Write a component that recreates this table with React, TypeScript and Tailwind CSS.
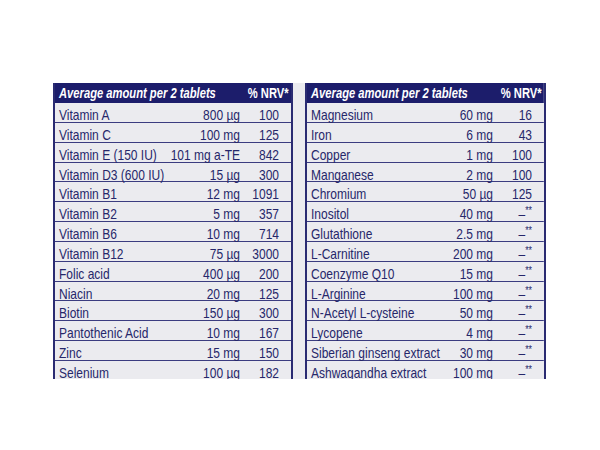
const left: [string, string, string][] = [
  ["Vitamin A", "800 µg", "100"],
  ["Vitamin C", "100 mg", "125"],
  ["Vitamin E (150 IU)", "101 mg a-TE", "842"],
  ["Vitamin D3 (600 IU)", "15 µg", "300"],
  ["Vitamin B1", "12 mg", "1091"],
  ["Vitamin B2", "5 mg", "357"],
  ["Vitamin B6", "10 mg", "714"],
  ["Vitamin B12", "75 µg", "3000"],
  ["Folic acid", "400 µg", "200"],
  ["Niacin", "20 mg", "125"],
  ["Biotin", "150 µg", "300"],
  ["Pantothenic Acid", "10 mg", "167"],
  ["Zinc", "15 mg", "150"],
  ["Selenium", "100 µg", "182"],
];

const right: [string, string, string][] = [
  ["Magnesium", "60 mg", "16"],
  ["Iron", "6 mg", "43"],
  ["Copper", "1 mg", "100"],
  ["Manganese", "2 mg", "100"],
  ["Chromium", "50 µg", "125"],
  ["Inositol", "40 mg", "-"],
  ["Glutathione", "2.5 mg", "-"],
  ["L-Carnitine", "200 mg", "-"],
  ["Coenzyme Q10", "15 mg", "-"],
  ["L-Arginine", "100 mg", "-"],
  ["N-Acetyl L-cysteine", "50 mg", "-"],
  ["Lycopene", "4 mg", "-"],
  ["Siberian ginseng extract", "30 mg", "-"],
  ["Ashwagandha extract", "100 mg", "-"],
];

// The print uses a condensed sans; Liberation Sans squeezed to 80% stands in for it.
const NutrientTable = ({
  rows,
  outer,
  inner,
}: {
  rows: [string, string, string][];
  outer: string;
  inner: string;
}) => (
  <div className={`shrink-0 border-x-2 border-[#2a2b72] ${outer}`}>
    <div className={`flex flex-col shrink-0 origin-left scale-x-[0.8] ${inner}`}>
      <div className="flex items-start h-[20px] bg-[#1c1d6b] text-white font-bold text-[14px] leading-[16px] pt-[2px] pl-[5px] pr-[3px]">
        <span className="flex-1 whitespace-nowrap italic">Average amount per 2 tablets</span>
        <span className="whitespace-nowrap">% NRV*</span>
      </div>
      {rows.map(([name, amount, nrv]) => (
        <div
          key={name}
          className="flex items-start shrink-0 h-[19.85px] border-b border-[#3b3c80] pl-[5px] pr-[15px] pt-[6px] text-[15px] leading-[12px] text-[#26276a]"
        >
          <span className="flex-1 whitespace-nowrap">{name}</span>
          <span className="whitespace-nowrap text-right">{amount}</span>
          <span className="w-[48.75px] whitespace-nowrap text-right">
            {nrv === "-" ? (
              <>
                –<span className="relative -top-[5px] text-[11px]">**</span>
              </>
            ) : (
              nrv
            )}
          </span>
        </div>
      ))}
    </div>
  </div>
);

export default function App() {
  return (
    <div
      className="w-[600px] h-[450px] bg-white pt-[83px] pl-[53px]"
      style={{ fontFamily: '"Liberation Sans", Arial, sans-serif' }}
    >
      <div className="flex gap-[12px] w-[493px] h-[296px] overflow-hidden bg-[#ebebef]">
        <NutrientTable rows={left} outer="w-[240px]" inner="w-[295px]" />
        <NutrientTable rows={right} outer="w-[241px]" inner="w-[296.25px]" />
      </div>
    </div>
  );
}
